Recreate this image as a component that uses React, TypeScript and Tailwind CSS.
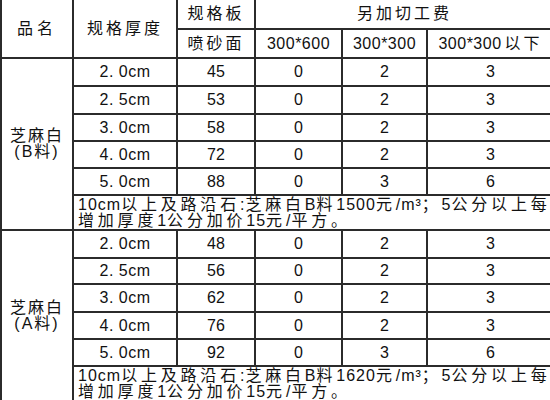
import React from 'react';

const font = "font-['Liberation_Sans','Noto_Sans_CJK_SC',sans-serif]";
const cell = 'border-2 border-[#2b2b2b] text-center p-0 text-[16px] leading-none';

const groups = [
  {
    name: 'B料',
    rows: [
      ['2. 0cm', '45', '0', '2', '3', 'h-[28px]'],
      ['2. 5cm', '53', '0', '2', '3', 'h-[28px]'],
      ['3. 0cm', '58', '0', '2', '3', 'h-[27px]'],
      ['4. 0cm', '72', '0', '2', '3', 'h-[27px]'],
      ['5. 0cm', '88', '0', '3', '6', 'h-[27px]'],
    ],
    price: '1500',
  },
  {
    name: 'A料',
    rows: [
      ['2. 0cm', '48', '0', '2', '3', 'h-[28px]'],
      ['2. 5cm', '56', '0', '2', '3', 'h-[26px]'],
      ['3. 0cm', '62', '0', '2', '3', 'h-[28px]'],
      ['4. 0cm', '76', '0', '2', '3', 'h-[27px]'],
      ['5. 0cm', '92', '0', '3', '6', 'h-[27px]'],
    ],
    price: '1620',
  },
];

// CJK runs in the notes are spaced wider than the latin ones
function C({ children }: { children: React.ReactNode }) {
  return <span className="tracking-[3.8px]">{children}</span>;
}

export default function App() {
  return (
    <div className={`w-[550px] h-[400px] overflow-hidden bg-white text-[#111] ${font}`}>
      <table className="table-fixed border-collapse w-[553px] -mt-[2px]">
        <colgroup>
          <col className="w-[72px]" />
          <col className="w-[104px]" />
          <col className="w-[78px]" />
          <col className="w-[87px]" />
          <col className="w-[85px]" />
          <col className="w-[127px]" />
        </colgroup>
        <thead>
          <tr className="h-[30px]">
            <th rowSpan={2} className={`${cell} font-normal tracking-[4px]`}>品名</th>
            <th rowSpan={2} className={`${cell} font-normal tracking-[3px]`}>规格厚度</th>
            <th className={`${cell} font-normal tracking-[3px]`}>规格板</th>
            <th colSpan={3} className={`${cell} font-normal tracking-[3px]`}>另加切工费</th>
          </tr>
          <tr className="h-[29px]">
            <th className={`${cell} font-normal tracking-[3px]`}>喷砂面</th>
            <th className={`${cell} font-normal tracking-[0.5px]`}>300*600</th>
            <th className={`${cell} font-normal tracking-[0.5px]`}>300*300</th>
            <th className={`${cell} font-normal tracking-[0.5px]`}>
              300*300<span className="ml-[3px] tracking-[3px]">以下</span>
            </th>
          </tr>
        </thead>
        <tbody>
          {groups.map((g) => (
            <React.Fragment key={g.name}>
              {g.rows.map((r, i) => (
                <tr key={r[0]} className={r[5]}>
                  {i === 0 && (
                    <td rowSpan={6} className={`${cell} leading-[18px]`}>
                      <div className="tracking-[2px]">芝麻白</div>
                      <div className="tracking-[2px]">({g.name})</div>
                    </td>
                  )}
                  <td className={`${cell} tracking-[0.5px]`}>{r[0]}</td>
                  <td className={cell}>{r[1]}</td>
                  <td className={cell}>{r[2]}</td>
                  <td className={cell}>{r[3]}</td>
                  <td className={cell}>{r[4]}</td>
                </tr>
              ))}
              <tr className="h-[35px]">
                <td colSpan={5} className={`${cell} align-top text-left pl-[4px] pt-[1px] text-[15px] leading-[15px] tracking-[1px] whitespace-nowrap`}>
                  <div>
                    10cm<C>以上及路沿石</C>:<C>芝麻白</C>B<C>料</C>{g.price}
                    <C>元</C>/m³<C>；</C>5<C>公分以上每</C>
                  </div>
                  <div>
                    <C>增加厚度</C>1<C>公分加价</C>15<C>元</C>/<C>平方。</C>
                  </div>
                </td>
              </tr>
            </React.Fragment>
          ))}
        </tbody>
      </table>
    </div>
  );
}
